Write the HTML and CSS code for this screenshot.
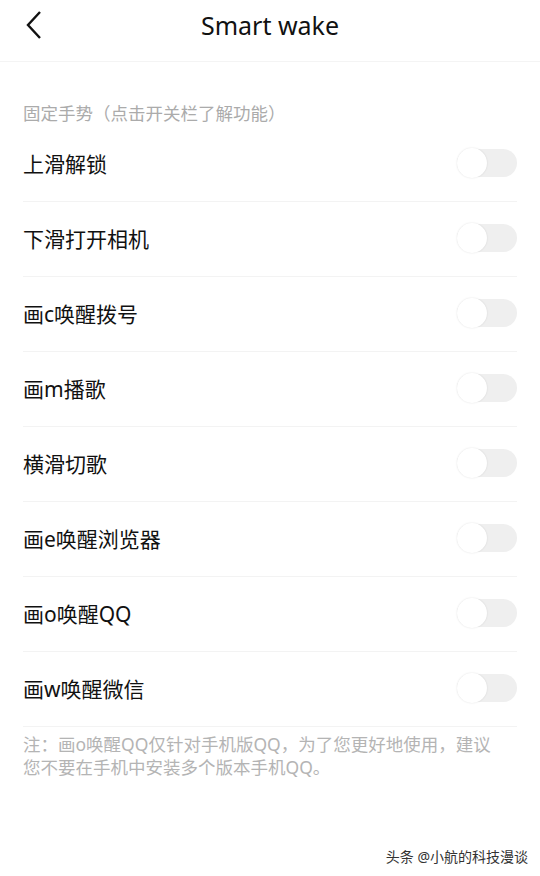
FILE: index.html
```html
<!DOCTYPE html>
<html lang="zh-CN">
<head>
  <meta charset="UTF-8">
  <meta name="viewport" content="width=device-width, initial-scale=1.0">
  <title>Smart wake</title>
  <link rel="stylesheet" href="styles.css">
</head>
<body>

<div class="page">
  <div class="header">
    <a href="#" class="atras">
      <svg width="16" height="30" viewBox="0 0 16 30"><polyline points="14,2 2,15 14,28" fill="none" stroke="#111" stroke-width="2.4" stroke-linejoin="miter"/></svg>
    </a>
    <h1>Smart wake</h1>
  </div>

  <div class="seccion">固定手势（点击开关栏了解功能）</div>

  <ul class="lista">
    <li><span>上滑解锁</span><span class="switch"></span></li>
    <li><span>下滑打开相机</span><span class="switch"></span></li>
    <li><span>画c唤醒拨号</span><span class="switch"></span></li>
    <li><span>画m播歌</span><span class="switch"></span></li>
    <li><span>横滑切歌</span><span class="switch"></span></li>
    <li><span>画e唤醒浏览器</span><span class="switch"></span></li>
    <li><span>画o唤醒QQ</span><span class="switch"></span></li>
    <li><span>画w唤醒微信</span><span class="switch"></span></li>
  </ul>

  <p class="nota">注：画o唤醒QQ仅针对手机版QQ，为了您更好地使用，建议您不要在手机中安装多个版本手机QQ。</p>

  <div class="marca">头条 @小航的科技漫谈</div>
</div>

</body>
</html>
```

FILE: styles.css
```css
body {
  font-family: "Noto Sans", "Noto Sans CJK SC", sans-serif;
  margin: 0;
  padding: 0;
  background-color: #fff;
  color: #111;
}
.page {
  position: relative;
  width: 540px;
  height: 876px;
  overflow: hidden;
}
.header {
  position: relative;
  height: 61px;
  border-bottom: 1px solid #f4f4f4;
  display: flex;
  align-items: center;
  justify-content: center;
}
.header h1 {
  margin: 0;
  font-size: 25px;
  font-weight: normal;
  line-height: 50px;
  margin-top: -12px;
}
.atras {
  position: absolute;
  left: 26px;
  top: 10px;
  display: block;
  line-height: 0;
}
.seccion {
  margin: 39px 23px 0;
  font-size: 17.5px;
  line-height: 24px;
  color: #ababab;
}
.lista {
  list-style: none;
  margin: 2px 23px 0;
  padding: 0;
}
.lista li {
  height: 71px;
  padding-bottom: 3px;
  border-bottom: 1px solid #f3f3f3;
  display: flex;
  align-items: center;
  justify-content: space-between;
  font-size: 21px;
}
.switch {
  position: relative;
  width: 60px;
  height: 28px;
  border-radius: 14px;
  background-color: #efefef;
}
.switch::after {
  content: "";
  position: absolute;
  left: 0;
  top: -1px;
  width: 30px;
  height: 30px;
  border-radius: 50%;
  background-color: #fff;
  box-shadow: 0 0 2px rgba(0,0,0,0.12);
}
.nota {
  margin: 6px 40px 0 23px;
  font-size: 17.5px;
  line-height: 23px;
  color: #b4b4b4;
}
.marca {
  position: absolute;
  right: 12px;
  bottom: 10px;
  font-size: 14px;
  color: #333;
}
```
